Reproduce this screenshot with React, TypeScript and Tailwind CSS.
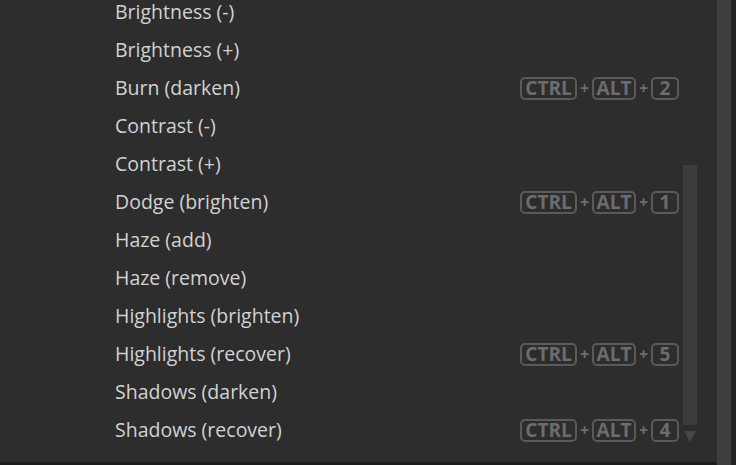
import React from "react";

const rows: { label: string; key?: string }[] = [
  { label: "Brightness (-)" },
  { label: "Brightness (+)" },
  { label: "Burn (darken)", key: "2" },
  { label: "Contrast (-)" },
  { label: "Contrast (+)" },
  { label: "Dodge (brighten)", key: "1" },
  { label: "Haze (add)" },
  { label: "Haze (remove)" },
  { label: "Highlights (brighten)" },
  { label: "Highlights (recover)", key: "5" },
  { label: "Shadows (darken)" },
  { label: "Shadows (recover)", key: "4" },
];

function Key({ children, w }: { children: React.ReactNode; w: string }) {
  return (
    <span
      className={`${w} h-[23px] flex items-center justify-center rounded-[5px] border-2 border-[#5a5a5a] text-[#6c6c6c] font-bold text-[19px] leading-none`}
    >
      {children}
    </span>
  );
}

function Plus() {
  return <span className="w-[15px] text-center text-[#6c6c6c] font-bold text-[16px] leading-none">+</span>;
}

export default function App() {
  return (
    <div
      className="w-[736px] h-[465px] bg-[#2d2d2d] flex overflow-hidden"
      style={{ fontFamily: '"Open Sans", "Noto Sans", sans-serif' }}
    >
      <div className="flex-1 flex flex-col">
        <div className="flex-1 flex overflow-hidden">
          <div className="flex-1 flex flex-col pl-[115px]">
            {rows.map((r, i) => (
              <div
                key={r.label}
                className={i === 0 ? "h-[31px] shrink-0 flex items-start" : "h-[38px] shrink-0 flex items-center"}
              >
                <span className="flex-1 text-[#d2d2d2] text-[19.5px] leading-[24px]">{r.label}</span>
                {r.key && (
                  <span className="flex items-center">
                    <Key w="w-[57px]">CTRL</Key>
                    <Plus />
                    <Key w="w-[44px]">ALT</Key>
                    <Plus />
                    <Key w="w-[28px]">{r.key}</Key>
                  </span>
                )}
              </div>
            ))}
          </div>
          <div className="w-[38px] shrink-0 flex flex-col items-start pl-[4px] pt-[165px]">
            <div className="w-[14px] h-[260px] bg-[#3c3c3c]" />
            <svg width="14" height="12" viewBox="0 0 14 12" className="mt-[6px]">
              <polygon points="1,0 13,0 7,11" fill="#474747" />
            </svg>
          </div>
        </div>
        <div className="h-[3px] bg-[#1c1c1c]" />
      </div>
      <div className="w-[14px] bg-[#3e3e3e]" />
      <div className="w-[5px] bg-[#222222]" />
    </div>
  );
}
